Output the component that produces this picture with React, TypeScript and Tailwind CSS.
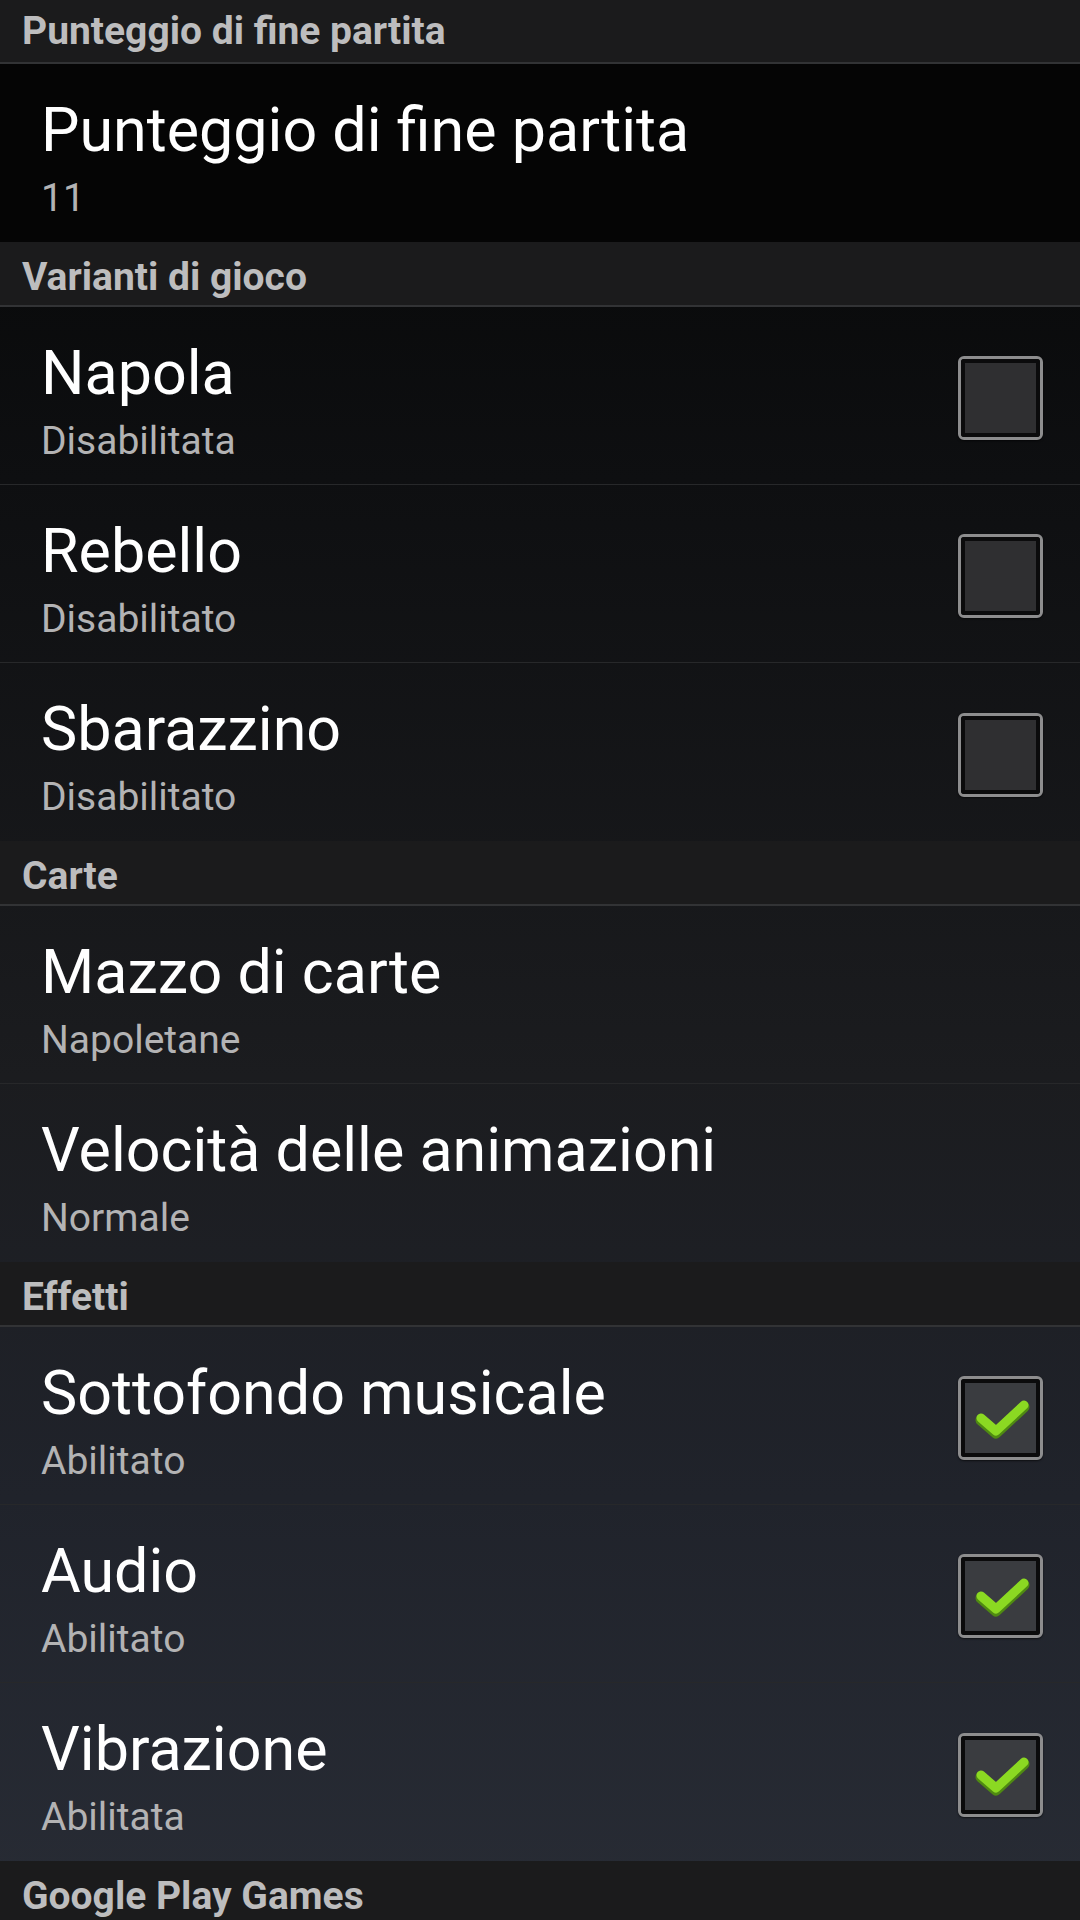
type Pref = {
  title: string;
  summary: string;
  checked?: boolean;
};

type Section = {
  header: string;
  items: Pref[];
};

const sections: Section[] = [
  {
    header: 'Punteggio di fine partita',
    items: [{ title: 'Punteggio di fine partita', summary: '11' }],
  },
  {
    header: 'Varianti di gioco',
    items: [
      { title: 'Napola', summary: 'Disabilitata', checked: false },
      { title: 'Rebello', summary: 'Disabilitato', checked: false },
      { title: 'Sbarazzino', summary: 'Disabilitato', checked: false },
    ],
  },
  {
    header: 'Carte',
    items: [
      { title: 'Mazzo di carte', summary: 'Napoletane' },
      { title: 'Velocità delle animazioni', summary: 'Normale' },
    ],
  },
  {
    header: 'Effetti',
    items: [
      { title: 'Sottofondo musicale', summary: 'Abilitato', checked: true },
      { title: 'Audio', summary: 'Abilitato', checked: true },
      { title: 'Vibrazione', summary: 'Abilitata', checked: true },
    ],
  },
  {
    header: 'Google Play Games',
    items: [],
  },
];

function CheckBox({ checked }: { checked: boolean }) {
  return (
    <div className="mt-[5px] w-[85px] h-[84px] rounded-[6px] border-[3px] border-[#8d8d8e] shadow-[0_1px_2px_rgba(0,0,0,0.6)]">
      <div
        className={
          checked
            ? 'relative w-full h-full rounded-[3px] border-[4px] border-[#0b0b0c] bg-[#3a3c40]'
            : 'relative w-full h-full rounded-[3px] border-[4px] border-[#0b0b0c] bg-[#2f2f31]'
        }
      >
        {checked && (
          <svg className="absolute -left-[7px] -top-[7px]" width="85" height="84" viewBox="0 0 85 84">
            <polyline
              points="23,44 38,57 66,31"
              fill="none"
              stroke="#4f8a12"
              strokeWidth="11"
              strokeLinecap="round"
              strokeLinejoin="round"
            />
            <polyline
              points="23,42 38,55 66,29"
              fill="none"
              stroke="#8bd922"
              strokeWidth="9"
              strokeLinecap="round"
              strokeLinejoin="round"
            />
          </svg>
        )}
      </div>
    </div>
  );
}

export default function App() {
  return (
    <div
      className="w-[1080px] h-[1920px] overflow-hidden bg-[linear-gradient(180deg,#050505_0%,#0a0b0c_15%,#0e0f11_25%,#1b1c1f_56%,#20232b_78%,#282c35_100%)]"
      style={{ fontFamily: 'Roboto, "Noto Sans", sans-serif' }}
    >
      {sections.map((section, si) => (
        <div key={section.header}>
          {/* category header */}
          <div
            className={
              (si === 0 ? 'h-[64px] pt-[9px] ' : 'h-[65px] pt-[13px] ') +
              'bg-[#1b1b1c] border-b-2 border-[#323335] pl-[22px]'
            }
          >
            <span className="text-[39px] leading-[44px] font-bold text-[#bdbdbe]">
              {section.header}
            </span>
          </div>
          {section.items.map((item, i) => (
            <div
              key={item.title}
              className={
                (si === 0 ? 'bg-[#050505] ' : '') +
                (i < section.items.length - 1 ? 'border-b border-[#27282a] ' : '') +
                'h-[178px] flex items-center justify-between pl-[41px] pr-[37px]'
              }
            >
              <div className="self-start flex flex-col pt-[30px]">
                <span className="text-[61px] leading-[72px] text-white">{item.title}</span>
                <span className="text-[39px] leading-[46px] mt-[9px] text-[#b3b3b4]">{item.summary}</span>
              </div>
              {item.checked !== undefined && <CheckBox checked={item.checked} />}
            </div>
          ))}
        </div>
      ))}
    </div>
  );
}
